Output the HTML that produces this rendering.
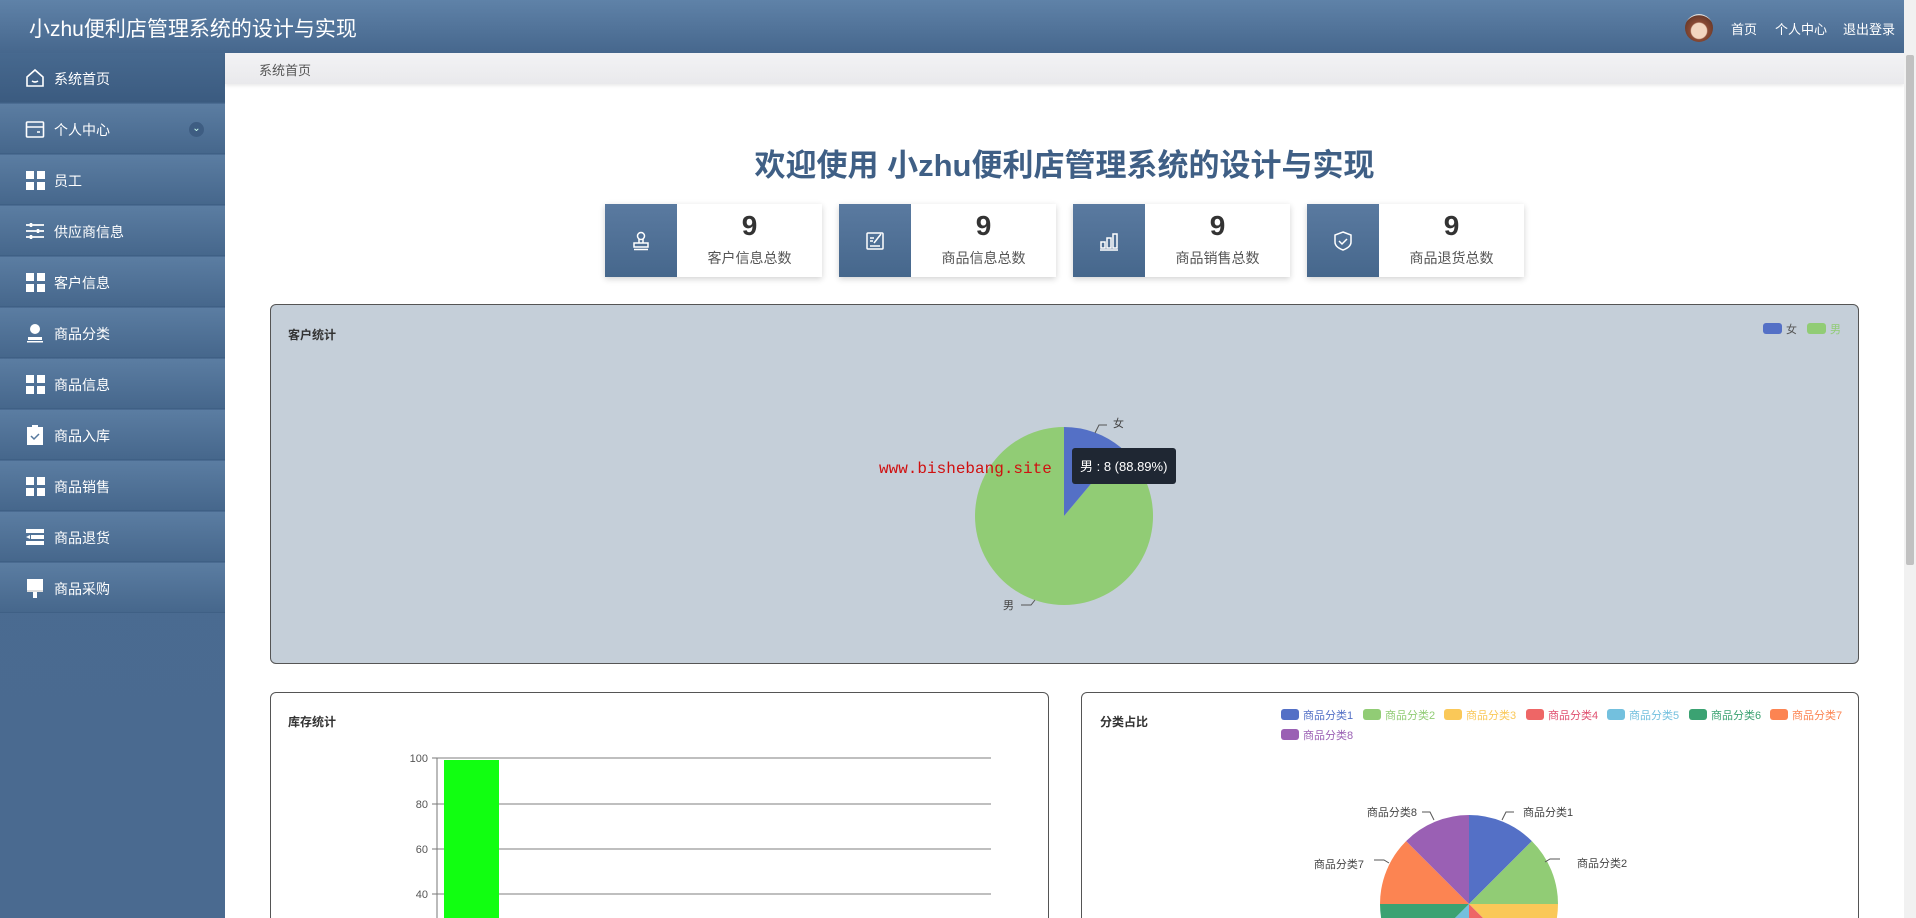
<!DOCTYPE html>
<html><head><meta charset="utf-8"><style>
*{margin:0;padding:0;box-sizing:border-box}
html,body{width:1916px;height:918px;overflow:hidden}
body{background:#fff;font-family:"Liberation Sans","Noto Sans CJK SC",sans-serif}
#root{position:relative;width:1916px;height:918px;overflow:hidden}
.hdr{position:absolute;left:0;top:0;width:1916px;height:53px;background:linear-gradient(#5f82a8,#46678d)}
.hdr .t{position:absolute;left:29px;top:13px;color:#fff;font-size:21px}
.hdr .r{position:absolute;top:19px;color:#fff;font-size:13px}
.av{position:absolute;left:1685px;top:14px;width:28px;height:28px;border-radius:50%;background:radial-gradient(circle at 50% 60%,#f3d6c0 35%,#8a4a34 40%,#6a3a2a 70%,#ddd 72%)}
.sb{position:absolute;left:0;top:53px;width:225px;height:865px;background:linear-gradient(#4b6c92,#4a6a90)}
.it{position:absolute;left:0;width:225px;height:50px;background:linear-gradient(#5b7da2,#46678c);border-bottom:1px solid #3f6085;color:#fff;font-size:14px}
.it span{position:absolute;left:54px;top:16px}
.it.a{background:linear-gradient(#47698f,#3b5b80)}
.ic{position:absolute;left:25px;top:15px;width:20px;height:20px}
.grid4{position:absolute;left:26px;top:16px;width:19px;height:19px;background:
linear-gradient(#fff,#fff) 0 0/8px 8px no-repeat,linear-gradient(#fff,#fff) 11px 0/8px 8px no-repeat,linear-gradient(#fff,#fff) 0 11px/8px 8px no-repeat,linear-gradient(#fff,#fff) 11px 11px/8px 8px no-repeat}
.bc{position:absolute;left:225px;top:53px;width:1679px;height:31px;background:linear-gradient(#f3f3f5,#e9e9ec);box-shadow:0 2px 3px rgba(0,0,0,.08)}
.bc span{position:absolute;left:34px;top:7px;font-size:13px;color:#555}
.title{position:absolute;left:225px;width:1679px;top:140px;text-align:center;font-size:31px;font-weight:bold;color:#3f5f85}
.card{position:absolute;top:204px;width:217px;height:73px;background:#fff;box-shadow:0 2px 6px rgba(0,0,0,.18)}
.card .l{position:absolute;left:0;top:0;width:72px;height:73px;background:linear-gradient(#5a7aa0,#46678c)}
.card .n{position:absolute;left:72px;right:0;top:6px;text-align:center;font-size:28px;font-weight:bold;color:#333}
.card .s{position:absolute;left:72px;right:0;top:44px;text-align:center;font-size:14px;color:#555}
.card svg{position:absolute;left:26px;top:27px}
.p{position:absolute;border:1px solid #555;border-radius:6px}
.pt{position:absolute;font-size:12px;font-weight:bold;color:#333}
.scr{position:absolute;left:1904px;top:0;width:12px;height:918px;background:#f1f1f1}
.scr div{position:absolute;left:2px;top:55px;width:8px;height:510px;background:#c1c1c1;border-radius:2px}
</style></head><body><div id="root">
<div class="hdr"><div class="t">小zhu便利店管理系统的设计与实现</div>
<div class="av"></div>
<div class="r" style="left:1731px">首页</div><div class="r" style="left:1775px">个人中心</div><div class="r" style="left:1843px">退出登录</div></div>
<div class="sb">
<div class="it a" style="top:0"><svg class="ic" viewBox="0 0 20 20" fill="none" stroke="#fff" stroke-width="1.6"><path d="M2 9L10 2l8 7v9H2z"/><path d="M7 13q3 2 6 0"/></svg><span>系统首页</span></div>
<div class="it" style="top:51px"><svg class="ic" viewBox="0 0 20 20" fill="none" stroke="#fff" stroke-width="1.6"><rect x="1.5" y="3" width="17" height="15" rx="1"/><path d="M1.5 8h17M12 13h3"/></svg><span>个人中心</span><div style="position:absolute;left:189px;top:18px;width:15px;height:15px;border-radius:50%;background:#3e5d82;color:#cfe;font-size:10px;text-align:center;line-height:14px">⌄</div></div>
<div class="it" style="top:102px"><div class="grid4"></div><span>员工</span></div>
<div class="it" style="top:153px"><svg class="ic" viewBox="0 0 20 20" stroke="#fff" stroke-width="1.8"><path d="M1 4h18M1 10h18M1 16h18"/><path d="M6 2v4M13 8v4M6 14v4" stroke-width="2.5"/></svg><span>供应商信息</span></div>
<div class="it" style="top:204px"><div class="grid4"></div><span>客户信息</span></div>
<div class="it" style="top:255px"><svg class="ic" viewBox="0 0 20 20" fill="#fff"><circle cx="10" cy="6" r="5"/><path d="M3 14h14v3H3z"/><path d="M2 18h16v1.5H2z"/></svg><span>商品分类</span></div>
<div class="it" style="top:306px"><div class="grid4"></div><span>商品信息</span></div>
<div class="it" style="top:357px"><svg class="ic" viewBox="0 0 20 20"><rect x="2" y="2" width="16" height="18" fill="#fff"/><rect x="7" y="0" width="6" height="3" fill="#fff"/><path d="M6 11l3 3 5-5" stroke="#57799e" stroke-width="1.5" fill="none"/></svg><span>商品入库</span></div>
<div class="it" style="top:408px"><div class="grid4"></div><span>商品销售</span></div>
<div class="it" style="top:459px"><svg class="ic" viewBox="0 0 20 20" fill="#fff"><rect x="1" y="2" width="18" height="4"/><rect x="6" y="8" width="13" height="4"/><rect x="1" y="14" width="18" height="4"/><path d="M1 10l4-2v4z"/></svg><span>商品退货</span></div>
<div class="it" style="top:510px"><svg class="ic" viewBox="0 0 20 20" fill="#fff"><rect x="2" y="1" width="16" height="11"/><rect x="2" y="12" width="16" height="2" fill="#ddd"/><rect x="8" y="14" width="4" height="6"/></svg><span>商品采购</span></div>
</div>
<div class="bc"><span>系统首页</span></div>
<div class="title">欢迎使用 小zhu便利店管理系统的设计与实现</div>

<div class="card" style="left:605px"><div class="l"><svg width="20" height="20" viewBox="0 0 20 20" fill="none" stroke="#fff" stroke-width="1.5"><circle cx="10" cy="5" r="3.5"/><path d="M8 8v4M12 8v4M3 12h14v4H3zM3 18.5h14"/></svg></div><div class="n">9</div><div class="s">客户信息总数</div></div>
<div class="card" style="left:839px"><div class="l"><svg width="20" height="20" viewBox="0 0 20 20" fill="none" stroke="#fff" stroke-width="1.5"><rect x="2" y="2" width="16" height="16" rx="1"/><path d="M5 7h4M5 10h3M9 12l7-9M5 15h10"/></svg></div><div class="n">9</div><div class="s">商品信息总数</div></div>
<div class="card" style="left:1073px"><div class="l"><svg width="20" height="20" viewBox="0 0 20 20" fill="none" stroke="#fff" stroke-width="1.5"><rect x="2" y="11" width="4" height="6"/><rect x="8" y="7" width="4" height="10"/><rect x="14" y="3" width="4" height="14"/><path d="M1 19h18"/></svg></div><div class="n">9</div><div class="s">商品销售总数</div></div>
<div class="card" style="left:1307px"><div class="l"><svg width="20" height="20" viewBox="0 0 20 20" fill="none" stroke="#fff" stroke-width="1.5"><path d="M10 1l8 3v7q0 5-8 8-8-3-8-8V4z"/><path d="M6 10l3 3 5-5"/></svg></div><div class="n">9</div><div class="s">商品退货总数</div></div>

<div class="p" style="left:270px;top:304px;width:1589px;height:360px;background:#c5cfd9"></div>
<div class="pt" style="left:288px;top:326px">客户统计</div>
<div style="position:absolute;left:1763px;top:323px;width:19px;height:11px;background:#5470c6;border-radius:3px"></div>
<div style="position:absolute;left:1786px;top:321px;font-size:11px;color:#555">女</div>
<div style="position:absolute;left:1807px;top:323px;width:19px;height:11px;background:#91cc75;border-radius:3px"></div>
<div style="position:absolute;left:1830px;top:321px;font-size:11px;color:#91cc75">男</div>

<div class="p" style="left:270px;top:692px;width:779px;height:240px;background:#fff"></div>
<div class="pt" style="left:288px;top:713px">库存统计</div>
<div class="p" style="left:1081px;top:692px;width:778px;height:240px;background:#fff"></div>
<div class="pt" style="left:1100px;top:713px">分类占比</div>

<svg style="position:absolute;left:0;top:0" width="1916" height="918" font-family="Liberation Sans, Noto Sans CJK SC, sans-serif">
<path d="M1064 516 L1121.2 447.8 A89 89 0 1 1 1064 427Z" fill="#91cc75"/>
<path d="M1064 516 L1064 427 A89 89 0 0 1 1121.2 447.8Z" fill="#5470c6"/>
<path d="M1095 433 l4 -8 h8" stroke="#555" fill="none"/>
<text x="1113" y="427" font-size="11" fill="#444">女</text>
<path d="M1035 600 l-4 5 h-10" stroke="#555" fill="none"/>
<text x="1003" y="609" font-size="11" fill="#444">男</text>
<text x="879" y="473" font-size="16" fill="#d01010" font-family="Liberation Mono, monospace">www.bishebang.site</text>
<rect x="1072" y="448" width="104" height="36" rx="3" fill="#1f2733"/>
<text x="1080" y="471" font-size="13" fill="#fff">男 : 8 (88.89%)</text>
<g stroke="#aaa" stroke-width="1.5"><path d="M437 758H991M437 804H991M437 849H991M437 894H991"/></g>
<path d="M437 758V918M432 758h5M432 804h5M432 849h5M432 894h5" stroke="#777"/>
<g font-size="11" fill="#555" text-anchor="end"><text x="428" y="762">100</text><text x="428" y="808">80</text><text x="428" y="853">60</text><text x="428" y="898">40</text></g>
<rect x="444" y="760" width="55" height="160" fill="#11ff11"/>
<g font-size="11">
<rect x="1281" y="709" width="18" height="11" rx="3" fill="#5470c6"/><text x="1303" y="719" fill="#5470c6">商品分类1</text>
<rect x="1363" y="709" width="18" height="11" rx="3" fill="#91cc75"/><text x="1385" y="719" fill="#91cc75">商品分类2</text>
<rect x="1444" y="709" width="18" height="11" rx="3" fill="#fac858"/><text x="1466" y="719" fill="#fac858">商品分类3</text>
<rect x="1526" y="709" width="18" height="11" rx="3" fill="#ee6666"/><text x="1548" y="719" fill="#e05070">商品分类4</text>
<rect x="1607" y="709" width="18" height="11" rx="3" fill="#73c0de"/><text x="1629" y="719" fill="#73c0de">商品分类5</text>
<rect x="1689" y="709" width="18" height="11" rx="3" fill="#3ba272"/><text x="1711" y="719" fill="#3ba272">商品分类6</text>
<rect x="1770" y="709" width="18" height="11" rx="3" fill="#fc8452"/><text x="1792" y="719" fill="#fc8452">商品分类7</text>
<rect x="1281" y="729" width="18" height="11" rx="3" fill="#9a60b4"/><text x="1303" y="739" fill="#9a60b4">商品分类8</text>
</g>
<path d="M1469 904L1469 815A89 89 0 0 1 1531.9 841.1Z" fill="#5470c6"/>
<path d="M1469 904L1531.9 841.1A89 89 0 0 1 1558 904Z" fill="#91cc75"/>
<path d="M1469 904L1558 904A89 89 0 0 1 1531.9 966.9Z" fill="#fac858"/>
<path d="M1469 904L1531.9 966.9A89 89 0 0 1 1469 993Z" fill="#ee6666"/>
<path d="M1469 904L1469 993A89 89 0 0 1 1406.1 966.9Z" fill="#73c0de"/>
<path d="M1469 904L1406.1 966.9A89 89 0 0 1 1380 904Z" fill="#3ba272"/>
<path d="M1469 904L1380 904A89 89 0 0 1 1406.1 841.1Z" fill="#fc8452"/>
<path d="M1469 904L1406.1 841.1A89 89 0 0 1 1469 815Z" fill="#9a60b4"/>
<g stroke="#555" fill="none"><path d="M1502 820l4-8h8M1545 862l5-3h10M1434 820l-4-8h-8M1389 863l-5-3h-10"/></g>
<g font-size="11" fill="#444"><text x="1523" y="816">商品分类1</text><text x="1577" y="867">商品分类2</text><text x="1417" y="816" text-anchor="end">商品分类8</text><text x="1364" y="868" text-anchor="end">商品分类7</text></g>
</svg>
<div class="scr"><div></div></div>
</div></body></html>
